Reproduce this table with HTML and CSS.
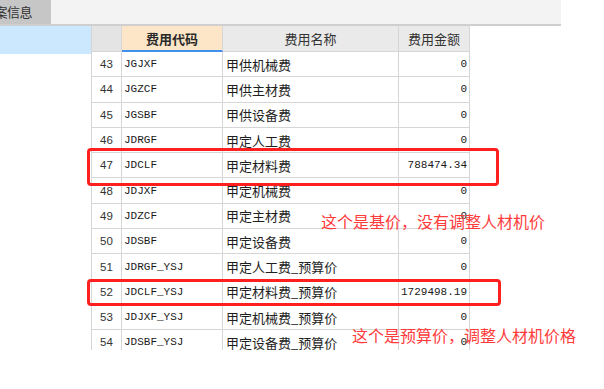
FILE: index.html
```html
<!DOCTYPE html>
<html lang="zh">
<head>
<meta charset="utf-8">
<title>费用代码</title>
<link rel="stylesheet" href="styles.css">
</head>
<body>
<div class="page">
  <div class="topbar">
    <div class="tab"><span class="tab-text">方案信息</span></div>
  </div>
  <div class="main">
    <div class="side">
      <div class="side-sel"></div>
    </div>
    <div class="grid">
      <div class="row head">
        <div class="c num"></div>
        <div class="c code sel">费用代码</div>
        <div class="c name">费用名称</div>
        <div class="c amt">费用金额</div>
      </div>
      <div class="row"><div class="c num">43</div><div class="c code">JGJXF</div><div class="c name">甲供机械费</div><div class="c amt">0</div></div>
      <div class="row"><div class="c num">44</div><div class="c code">JGZCF</div><div class="c name">甲供主材费</div><div class="c amt">0</div></div>
      <div class="row"><div class="c num">45</div><div class="c code">JGSBF</div><div class="c name">甲供设备费</div><div class="c amt">0</div></div>
      <div class="row"><div class="c num">46</div><div class="c code">JDRGF</div><div class="c name">甲定人工费</div><div class="c amt">0</div></div>
      <div class="row"><div class="c num">47</div><div class="c code">JDCLF</div><div class="c name">甲定材料费</div><div class="c amt">788474.34</div></div>
      <div class="row"><div class="c num">48</div><div class="c code">JDJXF</div><div class="c name">甲定机械费</div><div class="c amt">0</div></div>
      <div class="row"><div class="c num">49</div><div class="c code">JDZCF</div><div class="c name">甲定主材费</div><div class="c amt">0</div></div>
      <div class="row"><div class="c num">50</div><div class="c code">JDSBF</div><div class="c name">甲定设备费</div><div class="c amt">0</div></div>
      <div class="row"><div class="c num">51</div><div class="c code">JDRGF_YSJ</div><div class="c name">甲定人工费_预算价</div><div class="c amt">0</div></div>
      <div class="row"><div class="c num">52</div><div class="c code">JDCLF_YSJ</div><div class="c name">甲定材料费_预算价</div><div class="c amt">1729498.19</div></div>
      <div class="row"><div class="c num">53</div><div class="c code">JDJXF_YSJ</div><div class="c name">甲定机械费_预算价</div><div class="c amt">0</div></div>
      <div class="row"><div class="c num">54</div><div class="c code">JDSBF_YSJ</div><div class="c name">甲定设备费_预算价</div><div class="c amt">0</div></div>
    </div>
  </div>
  <div class="mark mark-1"></div>
  <div class="mark mark-2"></div>
  <div class="note note-1">这个是基价，没有调整人材机价</div>
  <div class="note note-2">这个是预算价，调整人材机价格</div>
</div>
</body>
</html>
```
FILE: styles.css
```css
* { box-sizing: border-box; }
html, body { margin: 0; padding: 0; background: #ffffff; }
body {
  width: 604px;
  height: 389px;
  overflow: hidden;
  font-family: "Noto Sans CJK SC", "Liberation Sans", sans-serif;
  color: #222;
}
.page { position: relative; width: 604px; height: 389px; }

.topbar {
  width: 561px;
  height: 26px;
  background: #f3f3f3;
  border-bottom: 2px solid #cfcfcf;
  display: flex;
}
.tab {
  width: 51px;
  height: 24px;
  background: #c6c6c6;
  overflow: hidden;
  display: flex;
  align-items: center;
}
.tab-text {
  margin-left: -18px;
  font-size: 13px;
  line-height: 24px;
  white-space: nowrap;
  color: #333;
  letter-spacing: -0.5px;
}

.main { display: flex; height: 324px; }
.side { width: 91px; }
.side-sel { height: 28px; background: #cce8ff; }

.grid {
  width: 379px;
  height: 324px;
  overflow: hidden;
  border-left: 1px solid #d6d6d6;
}
.row {
  display: grid;
  grid-template-columns: 30px 101px 176px 71px;
  height: 25.3px;
}
.c {
  border-right: 1px solid #d6d6d6;
  border-bottom: 1px solid #d6d6d6;
  display: flex;
  align-items: center;
  white-space: nowrap;
  overflow: hidden;
}
.num {
  justify-content: center;
  font-family: "Liberation Sans", sans-serif;
  font-size: 11.5px;
  color: #333;
}
.code {
  padding-left: 2px;
  font-family: "Liberation Mono", monospace;
  font-size: 11px;
  color: #1a1a1a;
}
.name { padding-left: 3px; font-size: 13px; color: #1e1e1e; }
.amt {
  justify-content: flex-end;
  padding-right: 2px;
  font-family: "Liberation Mono", monospace;
  font-size: 11px;
  color: #1a1a1a;
}

.row.head { height: 26px; }
.head .c {
  background: #eaeaea;
  justify-content: center;
  font-family: "Noto Sans CJK SC", sans-serif;
  font-size: 13px;
  color: #333;
  padding: 0;
}
.head .num { background: #e4e4e4; }
.head .code.sel {
  background: #fde6c8;
  font-weight: 700;
  color: #2a2a2a;
  border-bottom: 2px solid #3f91ec;
}

.mark {
  position: absolute;
  border: 3px solid #ff1f1f;
  border-radius: 4px;
}
.mark-1 { left: 87px; top: 148px; width: 412px; height: 38px; }
.mark-2 { left: 87px; top: 279px; width: 414px; height: 27px; }

.note {
  position: absolute;
  font-size: 16px;
  line-height: 20px;
  color: #ff3b3b;
  white-space: nowrap;
}
.note-1 { left: 321px; top: 211px; }
.note-2 { left: 352px; top: 325px; }
```
